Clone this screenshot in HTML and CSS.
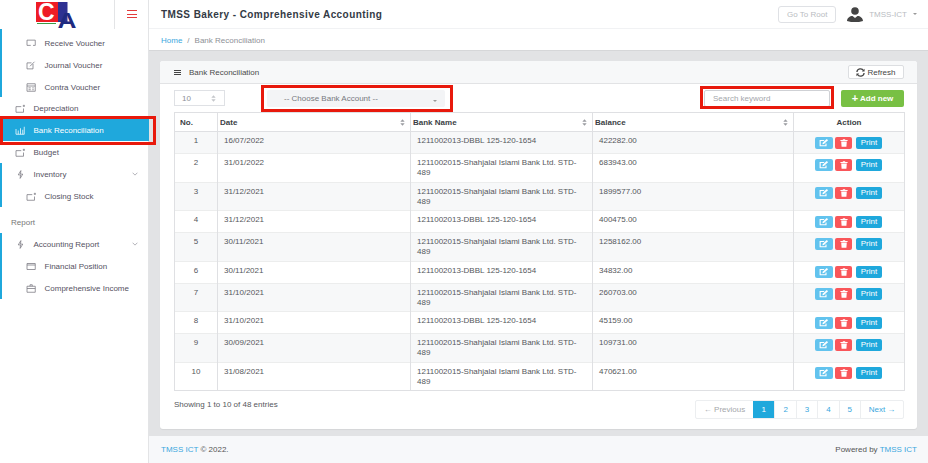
FILE: index.html
```html
<!DOCTYPE html>
<html lang="en">

<head>
  <meta charset="UTF-8">
  <meta name="viewport" content="width=device-width, initial-scale=1.0">
  <title>TMSS Bakery - Comprehensive Accounting</title>
  <link rel="stylesheet" href="styles.css">
</head>

<body>
  <svg class="defs" aria-hidden="true">
    <symbol id="i-edit" viewBox="0 0 12 10">
      <path d="M8.5 5.5v3H1.2V1.9h5" fill="none" stroke="currentColor" stroke-width="1.4"/>
      <path d="M4 6.6l.4-2L9.4.1l1.7 1.5-5.200 4.500z" fill="currentColor"/>
    </symbol>
    <symbol id="i-trash" viewBox="0 0 10 10">
      <path d="M.5 1.2h9v1.200h-9zM3.500.2h3v1h-3zM1.500 3h7l-.5 6.800H2z" fill="currentColor"/>
    </symbol>
    <symbol id="i-sort" viewBox="0 0 6 8">
      <path d="M3 0l2.600 3H.4zM3 8L.4 5h5.200z" fill="currentColor"/>
    </symbol>
    <symbol id="i-box" viewBox="0 0 14 12">
      <path d="M1 3.500h7M1 3.500v7.500h10V6M11.500 1v3M10 2.500h3" fill="none" stroke="currentColor"/>
    </symbol>
    <symbol id="i-bolt" viewBox="0 0 10 12">
      <path d="M5.500.8L2 6.500h3l-.5 4.700L8 5.500H5z" fill="none" stroke="currentColor"/>
    </symbol>
    <symbol id="i-chev" viewBox="0 0 8 5">
      <path d="M.8.8L4 4l3.200-3.200" fill="none" stroke="currentColor"/>
    </symbol>
  </svg>

  <div class="layout">
    <aside class="sidebar">
      <div class="brand">
        <svg class="logo" viewBox="0 0 42 38" aria-label="CA logo">
          <rect x="0" y="2" width="22" height="20" fill="#ee1c25"/>
          <rect x="22" y="2" width="9.500" height="20" fill="#2e3192"/>
          <text x="2" y="20" class="logo-c">C</text>
          <text x="21.500" y="28" class="logo-a" textLength="19" lengthAdjust="spacingAndGlyphs">A</text>
          <rect x="1" y="23" width="19" height="1" fill="#3a9b46"/>
        </svg>
        <button class="burger" aria-label="Menu"><span></span><span></span><span></span></button>
      </div>

      <nav class="nav">
        <ul class="sub">
          <li><svg class="ico" viewBox="0 0 14 12"><path d="M1 1.500h11v7H9M1 1.500v7h5" fill="none" stroke="currentColor"/></svg>Receive Voucher</li>
          <li><svg class="ico" viewBox="0 0 14 12"><path d="M9 4v6.500H1v-8h6M5 7l6-6" fill="none" stroke="currentColor"/></svg>Journal Voucher</li>
          <li><svg class="ico" viewBox="0 0 14 12"><path d="M1 1h11v10H1zM1 4h11M3 6.500h3M8 6.500h2M3 9h3M8 9h2" fill="none" stroke="currentColor"/></svg>Contra Voucher</li>
        </ul>
        <a class="item"><svg class="ico"><use href="#i-box"/></svg>Depreciation</a>
        <a class="item active"><svg class="ico" viewBox="0 0 14 12"><path d="M1 4v7h11V1M4 11V6M7 11V3M10 11V5" fill="none" stroke="currentColor"/></svg>Bank Reconciliation<span class="mark mark-nav"></span></a>
        <a class="item"><svg class="ico"><use href="#i-box"/></svg>Budget</a>
        <div class="group">
          <a class="item"><svg class="ico"><use href="#i-bolt"/></svg>Inventory<svg class="chev"><use href="#i-chev"/></svg></a>
          <ul class="sub">
            <li><svg class="ico"><use href="#i-box"/></svg>Closing Stock</li>
          </ul>
        </div>
        <div class="nav-label">Report</div>
        <div class="group">
          <a class="item"><svg class="ico"><use href="#i-bolt"/></svg>Accounting Report<svg class="chev"><use href="#i-chev"/></svg></a>
          <ul class="sub">
            <li><svg class="ico" viewBox="0 0 14 12"><path d="M1 2h11v8H1zM1 4h11" fill="none" stroke="currentColor"/></svg>Financial Position</li>
            <li><svg class="ico" viewBox="0 0 14 12"><path d="M1 3h11v8H1zM5 3V1h3v2M1 6h11" fill="none" stroke="currentColor"/></svg>Comprehensive Income</li>
          </ul>
        </div>
      </nav>
    </aside>

    <div class="main">
      <header class="topbar">
        <h1>TMSS Bakery - Comprehensive Accounting</h1>
        <div class="top-right">
          <a class="root-btn">Go To Root</a>
          <svg class="avatar" viewBox="0 0 16 15"><circle cx="8" cy="4" r="3.800" fill="#444"/><path d="M0 14c0-3 3-5 5.500-5L8 11l2.500-2c2.500 0 5.500 2 5.500 5l-4 1H4z" fill="#444"/></svg>
          <span class="user">TMSS-ICT</span>
          <span class="caret"></span>
        </div>
      </header>

      <div class="crumbs"><a>Home</a><span class="sep">/</span><span>Bank Reconciliation</span></div>

      <main class="content">
        <section class="card">
          <div class="card-head">
            <div class="card-title"><span class="lines"><i></i><i></i><i></i></span>Bank Reconciliation</div>
            <button class="refresh">
              <svg viewBox="0 0 10 10"><path d="M1 4.500A4 4 0 0 1 8.500 3M9 5.500A4 4 0 0 1 1.500 7" fill="none" stroke="currentColor" stroke-width="1.400"/><path d="M9.500.8v3H6.500zM.5 9.200v-3h3z" fill="currentColor"/></svg>
              Refresh
            </button>
          </div>

          <div class="card-body">
            <div class="tools">
              <div class="length">10<svg class="sort"><use href="#i-sort"/></svg></div>
              <div class="choose">
                <span>-- Choose Bank Account --</span><span class="caret small"></span>
                <span class="mark mark-choose"></span>
              </div>
              <div class="search">
                Search keyword
                <span class="mark mark-search"></span>
              </div>
              <button class="add"><b>+</b> Add new</button>
            </div>

            <table class="grid">
              <thead>
                <tr>
                  <th class="c-no">No.</th>
                  <th class="c-date">Date<svg class="sort"><use href="#i-sort"/></svg></th>
                  <th class="c-bank">Bank Name<svg class="sort"><use href="#i-sort"/></svg></th>
                  <th class="c-bal">Balance<svg class="sort"><use href="#i-sort"/></svg></th>
                  <th class="c-act">Action</th>
                </tr>
              </thead>
              <tbody>
                <tr class="odd short">
                  <td class="no">1</td><td>16/07/2022</td><td>1211002013-DBBL 125-120-1654</td><td>422282.00</td>
                  <td class="act"><a class="b edit"><svg><use href="#i-edit"/></svg></a><a class="b del"><svg><use href="#i-trash"/></svg></a><a class="b print">Print</a></td>
                </tr>
                <tr>
                  <td class="no">2</td><td>31/01/2022</td><td>1211002015-Shahjalal Islami Bank Ltd. STD-489</td><td>683943.00</td>
                  <td class="act"><a class="b edit"><svg><use href="#i-edit"/></svg></a><a class="b del"><svg><use href="#i-trash"/></svg></a><a class="b print">Print</a></td>
                </tr>
                <tr class="odd">
                  <td class="no">3</td><td>31/12/2021</td><td>1211002015-Shahjalal Islami Bank Ltd. STD-489</td><td>1899577.00</td>
                  <td class="act"><a class="b edit"><svg><use href="#i-edit"/></svg></a><a class="b del"><svg><use href="#i-trash"/></svg></a><a class="b print">Print</a></td>
                </tr>
                <tr class="short">
                  <td class="no">4</td><td>31/12/2021</td><td>1211002013-DBBL 125-120-1654</td><td>400475.00</td>
                  <td class="act"><a class="b edit"><svg><use href="#i-edit"/></svg></a><a class="b del"><svg><use href="#i-trash"/></svg></a><a class="b print">Print</a></td>
                </tr>
                <tr class="odd">
                  <td class="no">5</td><td>30/11/2021</td><td>1211002015-Shahjalal Islami Bank Ltd. STD-489</td><td>1258162.00</td>
                  <td class="act"><a class="b edit"><svg><use href="#i-edit"/></svg></a><a class="b del"><svg><use href="#i-trash"/></svg></a><a class="b print">Print</a></td>
                </tr>
                <tr class="short">
                  <td class="no">6</td><td>30/11/2021</td><td>1211002013-DBBL 125-120-1654</td><td>34832.00</td>
                  <td class="act"><a class="b edit"><svg><use href="#i-edit"/></svg></a><a class="b del"><svg><use href="#i-trash"/></svg></a><a class="b print">Print</a></td>
                </tr>
                <tr class="odd">
                  <td class="no">7</td><td>31/10/2021</td><td>1211002015-Shahjalal Islami Bank Ltd. STD-489</td><td>260703.00</td>
                  <td class="act"><a class="b edit"><svg><use href="#i-edit"/></svg></a><a class="b del"><svg><use href="#i-trash"/></svg></a><a class="b print">Print</a></td>
                </tr>
                <tr class="short">
                  <td class="no">8</td><td>31/10/2021</td><td>1211002013-DBBL 125-120-1654</td><td>45159.00</td>
                  <td class="act"><a class="b edit"><svg><use href="#i-edit"/></svg></a><a class="b del"><svg><use href="#i-trash"/></svg></a><a class="b print">Print</a></td>
                </tr>
                <tr class="odd">
                  <td class="no">9</td><td>30/09/2021</td><td>1211002015-Shahjalal Islami Bank Ltd. STD-489</td><td>109731.00</td>
                  <td class="act"><a class="b edit"><svg><use href="#i-edit"/></svg></a><a class="b del"><svg><use href="#i-trash"/></svg></a><a class="b print">Print</a></td>
                </tr>
                <tr>
                  <td class="no">10</td><td>31/08/2021</td><td>1211002015-Shahjalal Islami Bank Ltd. STD-489</td><td>470621.00</td>
                  <td class="act"><a class="b edit"><svg><use href="#i-edit"/></svg></a><a class="b del"><svg><use href="#i-trash"/></svg></a><a class="b print">Print</a></td>
                </tr>
              </tbody>
            </table>

            <div class="table-foot">
              <div class="info">Showing 1 to 10 of 48 entries</div>
              <ul class="pager">
                <li class="off wide-prev">← Previous</li>
                <li class="on">1</li>
                <li>2</li>
                <li>3</li>
                <li>4</li>
                <li>5</li>
                <li class="wide-next">Next →</li>
              </ul>
            </div>
          </div>
        </section>
      </main>

      <footer class="foot">
        <div><a>TMSS ICT</a> © 2022.</div>
        <div>Powered by <a>TMSS ICT</a></div>
      </footer>
    </div>
  </div>
</body>

</html>
```

FILE: styles.css
```css
* {
  box-sizing: border-box;
}

html,
body {
  margin: 0;
  height: 463px;
  overflow: hidden;
}

body {
  font-family: "Liberation Sans", Arial, sans-serif;
  font-size: 8px;
  color: #4a4a4a;
  background: #fff;
}

a {
  color: inherit;
  text-decoration: none;
}

ul {
  list-style: none;
  margin: 0;
  padding: 0;
}

.defs {
  display: none;
}

.layout {
  display: flex;
  height: 463px;
}

/* sidebar */
.sidebar {
  width: 149px;
  flex: none;
  background: #fff;
  border-right: 1px solid #e3e4e6;
}

.brand {
  height: 29px;
  display: flex;
  align-items: flex-start;
  justify-content: space-between;
  padding-left: 36px;
}

.logo {
  width: 42px;
  height: 38px;
}

.logo-c {
  font: bold 23px "Liberation Sans", sans-serif;
  fill: #fff;
}

.logo-a {
  font: bold 22px "Liberation Sans", sans-serif;
  fill: #1f2a80;
}

.burger {
  width: 34px;
  height: 29px;
  background: none;
  border: none;
  border-left: 1px solid #e3e4e6;
  display: flex;
  flex-direction: column;
  justify-content: center;
  align-items: center;
  gap: 2.5px;
  padding: 0 0 1px;
}

.burger span {
  width: 10px;
  height: 1px;
  background: #e33b3b;
}

.nav .item,
.sub li {
  height: 22px;
  display: flex;
  align-items: center;
  color: #55525f;
  position: relative;
}

.nav .item {
  padding-left: 15px;
}

.sub {
  border-left: 2px solid #1fa8dc;
}

.sub li {
  padding-left: 24px;
}

.nav > .sub {
  height: 68px;
  padding-top: 3px;
}

.ico {
  width: 11px;
  height: 9px;
  margin-right: 7.5px;
  flex: none;
  color: #77757f;
}

.item.active {
  background: #1fa8dc;
  color: #fff;
  margin: 0 -1px 0 2px;
  padding-left: 13px;
}

.item.active .ico {
  color: #fff;
}

.group {
  border-left: 2px solid #1fa8dc;
}

.group .item {
  padding-left: 13px;
}

.group .sub {
  border-left: none;
}

.chev {
  width: 6px;
  height: 4px;
  margin-left: auto;
  margin-right: 10px;
  color: #9a9aa2;
}

.nav-label {
  height: 26px;
  padding: 11px 0 0 11px;
  color: #777;
}

/* red annotation boxes */
.choose,
.search {
  position: relative;
}

.mark {
  position: absolute;
  border: 3px solid #e8190c;
  pointer-events: none;
}

.mark-nav {
  inset: -3px -7px -4px -2px;
}

.mark-choose {
  inset: -5px -8px -5px -6px;
}

.mark-search {
  inset: -5px -5px -3px -5px;
}

/* top area */
.main {
  flex: 1;
  min-width: 0;
  display: flex;
  flex-direction: column;
}

.topbar {
  height: 29px;
  flex: none;
  display: flex;
  align-items: center;
  justify-content: space-between;
  padding: 0 11px 0 12px;
  border-bottom: 1px solid #f1f2f4;
}

.topbar h1 {
  margin: 0;
  font-size: 10px;
  letter-spacing: .42px;
  color: #333a45;
}

.top-right {
  display: flex;
  align-items: center;
  color: #b9bcc2;
}

.root-btn {
  width: 58px;
  height: 17px;
  line-height: 15px;
  text-align: center;
  border: 1px solid #dfe1e5;
  border-radius: 3px;
  margin-right: 11px;
}

.avatar {
  width: 16px;
  height: 15px;
  margin-right: 6px;
}

.user {
  margin-right: 6px;
}

.caret {
  width: 0;
  height: 0;
  border-left: 2.5px solid transparent;
  border-right: 2.5px solid transparent;
  border-top: 2.5px solid #999;
}

.crumbs {
  height: 22px;
  flex: none;
  display: flex;
  align-items: center;
  padding: 1px 0 0 12px;
  color: #8d9096;
  border-bottom: 1px solid #d6d7d9;
}

.crumbs a {
  color: #3aa7de;
}

.crumbs .sep {
  margin: 0 5px;
}

.content {
  flex: 1;
  min-height: 0;
  background: #e2e3e5;
  padding: 10px 11px 6px;
}

/* card */
.card {
  background: #fff;
  height: 368px;
  border-radius: 3px;
  box-shadow: 0 1px 1px rgba(0, 0, 0, .06);
}

.card-head {
  height: 23px;
  display: flex;
  align-items: center;
  justify-content: space-between;
  padding: 0 13px 0 14px;
  background: #f7f8f9;
  border-bottom: 1px solid #e2e3e5;
  border-radius: 3px 3px 0 0;
}

.card-title {
  display: flex;
  align-items: center;
}

.lines {
  display: flex;
  flex-direction: column;
  gap: 1px;
  margin-right: 8px;
}

.lines i {
  width: 7px;
  height: 1px;
  background: #444;
}

.refresh {
  width: 56px;
  height: 14px;
  font: 8px "Liberation Sans", sans-serif;
  color: #444;
  background: #fff;
  border: 1px solid #dcdee1;
  border-radius: 2px;
  padding: 0;
  display: flex;
  align-items: center;
  justify-content: center;
  gap: 2px;
}

.refresh svg {
  width: 9px;
  height: 9px;
}

.card-body {
  padding: 6px 13px 0 14px;
}

.tools {
  height: 17px;
  display: flex;
  align-items: flex-start;
  margin-bottom: 5px;
}

.length {
  width: 51px;
  height: 16px;
  border: 1px solid #dfe1e5;
  display: flex;
  align-items: center;
  justify-content: space-between;
  padding: 0 8px 0 7px;
  color: #8d9096;
}

.length .sort {
  color: #c4c6ca;
}

.sort {
  width: 5px;
  height: 7px;
  color: #9a9ca1;
}

.choose {
  width: 178px;
  height: 17px;
  margin-left: 42px;
  background: #f3f4f6;
  border-radius: 2px;
  display: flex;
  align-items: center;
  justify-content: space-between;
  padding: 0 8px 0 17px;
  color: #77797e;
}

.caret.small {
  margin-top: 5px;
}

.search {
  width: 126px;
  height: 17px;
  margin-left: 259px;
  border: 1px solid #cfd1d5;
  border-radius: 2px;
  display: flex;
  align-items: center;
  padding-left: 8px;
  color: #a4a6ab;
}

.add {
  width: 63px;
  height: 17px;
  margin-left: 11px;
  background: #78c044;
  color: #fff;
  border: none;
  border-radius: 2px;
  font: bold 8px "Liberation Sans", sans-serif;
  padding: 0;
}

.add b {
  font-size: 11px;
  line-height: 8px;
  vertical-align: -1px;
}

/* table */
.grid {
  width: 730px;
  table-layout: fixed;
  border-collapse: collapse;
  border: 1px solid #dfe0e3;
}

.grid th {
  height: 19px;
  font-size: 8px;
  font-weight: bold;
  text-align: left;
  color: #3c3f45;
  padding: 0 2px;
  border: 1px solid #dfe0e3;
  position: relative;
}

.grid th .sort {
  position: absolute;
  right: 5px;
  top: 6px;
}

.grid th.c-no {
  width: 43px;
  padding: 0 5px;
}

.c-date {
  width: 193px;
}

.c-bank {
  width: 182px;
}

.c-bal {
  width: 201px;
}

.grid th.c-act {
  width: 111px;
  text-align: center;
}

.grid td {
  height: 28.5px;
  padding: 4px 5px 0 6px;
  vertical-align: top;
  line-height: 10px;
  color: #55575c;
  border-left: 1px solid #dfe0e3;
  border-right: 1px solid #dfe0e3;
  border-top: 1px solid #eceded;
}

.grid tr.short td {
  height: 22px;
}

.grid tr.odd td {
  background: #f7f8f9;
}

.grid td.no {
  padding-left: 5px;
  text-align: center;
}

.grid td:nth-child(3) {
  padding-right: 8px;
}

.grid td.act {
  padding: 4.5px 0 0 21px;
  white-space: nowrap;
  font-size: 0;
  line-height: 0;
}

.b {
  display: inline-flex;
  align-items: center;
  justify-content: center;
  height: 12px;
  border-radius: 2px;
  color: #fff;
  font-size: 8px;
  vertical-align: top;
}

.b.edit svg {
  width: 10px;
  height: 8px;
}

.b.del svg {
  width: 8px;
  height: 8px;
}

.b.edit {
  width: 18px;
  background: #62c3ee;
}

.b.del {
  width: 17px;
  margin-left: 2px;
  background: #f9565a;
}

.b.print {
  width: 26px;
  margin-left: 4px;
  background: #1fa8dc;
}

/* table footer */
.table-foot {
  display: flex;
  justify-content: space-between;
  align-items: flex-start;
  margin-top: 9px;
}

.info {
  color: #55575c;
  line-height: 9px;
}

.pager {
  display: flex;
  height: 19px;
  border: 1px solid #eceef0;
  border-radius: 2px;
  color: #3aa7de;
}

.pager li {
  width: 21.4px;
  display: flex;
  align-items: center;
  justify-content: center;
  border-left: 1px solid #eceef0;
}

.pager li:first-child {
  border-left: none;
}

.pager .wide-prev {
  width: 57px;
}

.pager .wide-next {
  width: 43px;
}

.pager .off {
  color: #a5a7ab;
}

.pager .on {
  background: #1fa8dc;
  color: #fff;
  border-left: none;
}

/* page footer */
.foot {
  height: 27px;
  flex: none;
  display: flex;
  align-items: center;
  justify-content: space-between;
  padding: 0 11px 1px 12px;
  background: #f7f8fa;
  color: #555;
}

.foot a {
  color: #3aa7de;
}
```
